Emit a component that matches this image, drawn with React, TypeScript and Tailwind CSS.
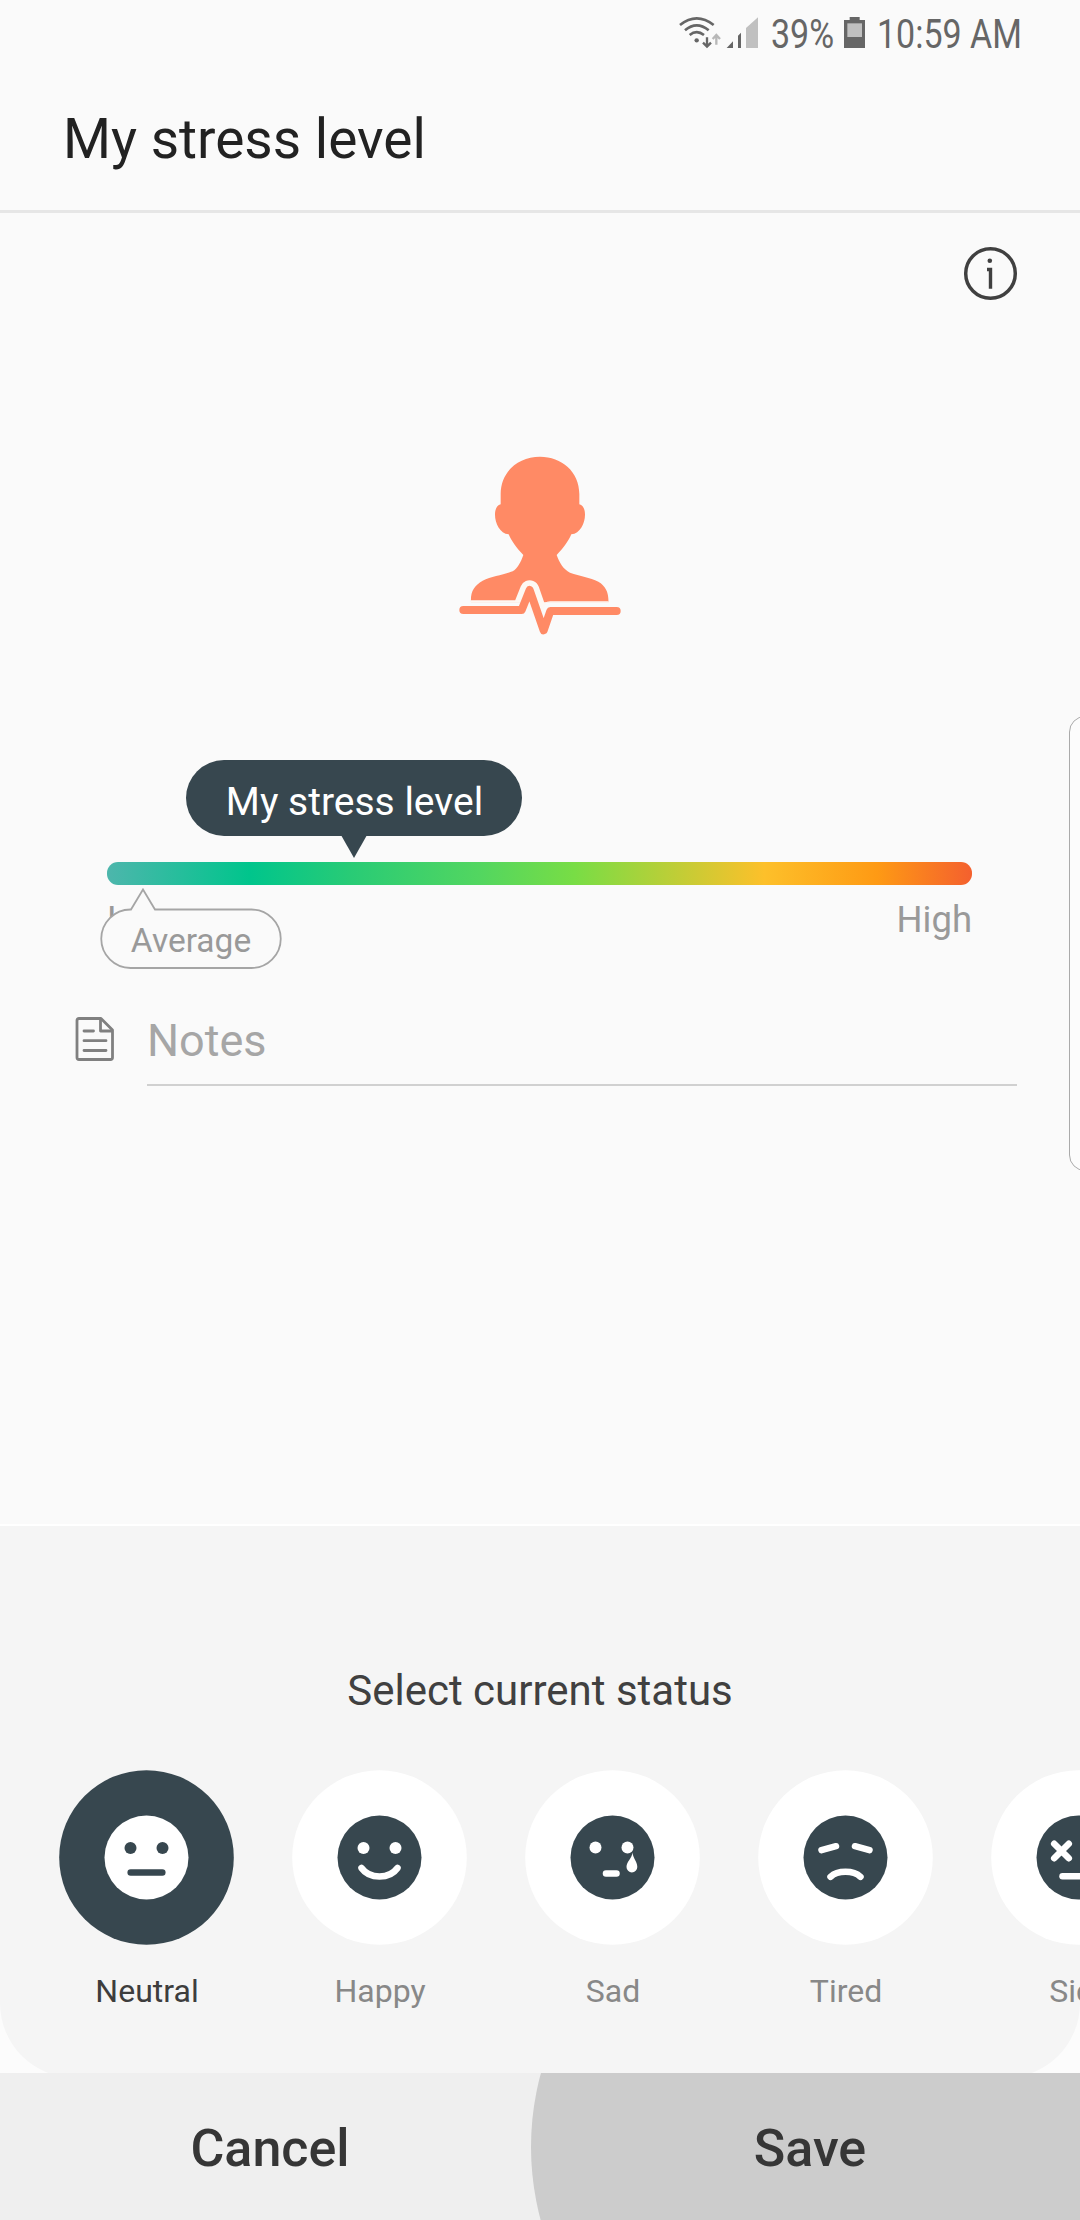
import { useState, type ReactNode } from 'react';
import clsx from 'clsx';

interface Status {
  label: string;
  face: ReactNode;
}

// Faces are drawn around 0,0. The features take the colour of the outer circle.
const statuses: Status[] = [
  {
    label: 'Neutral',
    face: (
      <>
        <circle cx="-16" cy="-9.5" r="6" fill="currentColor" stroke="none" />
        <circle cx="16" cy="-9.5" r="6" fill="currentColor" stroke="none" />
        <path d="M-15.8 15H15.8" />
      </>
    )
  },
  {
    label: 'Happy',
    face: (
      <>
        <circle cx="-16" cy="-9.5" r="6" fill="currentColor" stroke="none" />
        <circle cx="16" cy="-9.5" r="6" fill="currentColor" stroke="none" />
        <path d="M-18 10.5C-10 21.8 10 21.8 18 10.5" />
      </>
    )
  },
  {
    label: 'Sad',
    face: (
      <>
        <circle cx="-17" cy="-10" r="6" fill="currentColor" stroke="none" />
        <circle cx="15" cy="-10" r="6" fill="currentColor" stroke="none" />
        <path
          d="M20 -5C20.5 1 24.8 4 24.8 9.5A5.4 5.4 0 0 1 14 9.5C14 4 19.5 1 20 -5Z"
          fill="currentColor"
          stroke="none"
        />
        <path d="M-6.5 16H4" />
      </>
    )
  },
  {
    label: 'Tired',
    face: (
      <>
        <path d="M-24 -7.3L-9.5 -11.3M9.5 -11.3L24 -7.3" />
        <path d="M-15 19.3C-8 12.7 8 12.7 15 19.3" />
      </>
    )
  },
  {
    label: 'Sick',
    face: (
      <>
        <path d="M-24.3 -13.8L-9.7 0.8M-9.7 -13.8L-24.3 0.8M9.7 -13.8L24.3 0.8M24.3 -13.8L9.7 0.8" />
        <path d="M-16 18.7H16" />
      </>
    )
  }
];

function StatusBar() {
  return (
    <div className="flex h-[69px] items-center text-[40px] leading-none text-[#666666]">
      <svg className="ml-[675px] h-[69px] w-[85px] shrink-0" viewBox="45 0 255 207">
        <g fill="none" stroke="#666666" strokeWidth="8">
          <path d="M60 75Q110 35 161 75" />
          <path d="M75 91Q110 61 146 91" />
          <path d="M89 105Q110 88 132 105" />
        </g>
        <circle cx="110" cy="121" r="6.5" fill="#666666" />
        <path d="M141 112V139M129 128L141 140L153 128" fill="none" stroke="#666666" strokeWidth="7" />
        <path d="M169 134V106M158 117L169 105L180 117" fill="none" stroke="#b8b8b8" strokeWidth="7" />
        <path d="M200 144L219 124V144ZM234 107L243 98V144H234Z" fill="#666666" />
        <path d="M258 144V84L294 52V144Z" fill="#c0c0c0" />
      </svg>
      <span className="ml-[11px] w-[63px] origin-left scale-x-[0.85] whitespace-nowrap">39%</span>
      <svg className="ml-[10px] h-[69px] w-[21px] shrink-0" viewBox="552 0 63 207">
        <path d="M552 60H569V51H599V60H615V144H552Z" fill="#666666" />
        <path d="M562 70H606V111H562Z" fill="#c0c0c0" />
      </svg>
      <span className="ml-[12px] w-[150px] origin-left scale-x-[0.85] whitespace-nowrap">10:59 AM</span>
    </div>
  );
}

function PersonIcon() {
  return (
    <svg className="h-[210px] w-[200px]" viewBox="0 0 600 630" fill="none">
      <path
        d="M182 193V162C182 95 235 50 300 50S418 95 418 162V193C430 197 435 208 435 224C435 250 420 280 394 283C387 300 370 325 350 345C358 368 370 388 390 398C420 408 450 412 475 425C498 438 507 460 505 487H93C91 455 102 437 128 422C155 409 190 405 218 394C232 386 242 368 250 345C230 325 213 300 206 283C180 280 165 250 165 224C165 208 170 197 182 193Z"
        fill="#ff8a65"
      />
      <g strokeLinecap="round" strokeLinejoin="round">
        <path d="M70 510H245L269 450L311 571L331 513H530" stroke="#fdf8f3" strokeWidth="58" clipPath="url(#body)" />
        <path d="M70 510H245L269 450L311 571L331 513H530" stroke="#ff8a65" strokeWidth="24" />
      </g>
      <clipPath id="body">
        <path d="M92 400H506V488H320L300 530H280L250 488H92Z" />
      </clipPath>
    </svg>
  );
}

function StressSlider() {
  return (
    <div className="relative ml-[107px] w-[865px] pt-[212px]">
      <div className="h-[23px] rounded-[11px] bg-[linear-gradient(90deg,#4db6ac_0%,#00c58c_16.5%,#28cb76_28%,#52d660_43%,#78dd45_54%,#fdc02a_76%,#fe9a14_89%,#f4602e_100%)]" />
      <div className="flex h-[69px] justify-between pt-[16px] text-[36.5px] leading-[37px] text-[#999999]">
        <span>Low</span>
        <span>High</span>
      </div>

      {/* Current value marker */}
      <div className="absolute top-[110px] left-[79px] flex flex-col items-center">
        <div className="flex h-[76px] w-[336px] items-center justify-center rounded-full bg-[#37474f] pt-[8px] pl-px text-[39px] leading-none whitespace-nowrap text-white">
          My stress level
        </div>
        <svg className="-mt-px h-[23px] w-[26px]" viewBox="0 0 26 23">
          <path d="M0 0H26L13 23Z" fill="#37474f" />
        </svg>
      </div>

      {/* Average marker */}
      <div className="absolute top-[238px] left-[-7px] flex h-[82px] w-[182px] items-end justify-center">
        <svg className="absolute top-0 left-0 h-[82px] w-[182px]" viewBox="0 0 182 82">
          <path
            d="M31 21.5L43 1.5L55 21.5H151.5A29.25 29.25 0 0 1 151.5 80H30.5A29.25 29.25 0 0 1 30.5 21.5Z"
            fill="#fafafa"
            stroke="#a5a5a5"
            strokeWidth="1.8"
          />
        </svg>
        <span className="relative mb-[13px] text-[33.5px] leading-none text-[#999999]">Average</span>
      </div>
    </div>
  );
}

function NotesField() {
  return (
    <div className="flex h-[85px] pl-[75px]">
      <svg className="mt-[15px] h-[46px] w-[40px]" viewBox="0 0 40 46" fill="none" stroke="#808080" strokeWidth="2.8" strokeLinejoin="round">
        <path d="M4 2.5H26L37.5 14V41.5Q37.5 43.5 35.5 43.5H4Q2 43.5 2 41.5V4.5Q2 2.5 4 2.5Z" />
        <path d="M25.5 3V15H37" />
        <path d="M9 15H18.5M9 24.7H31M9 34.5H31" strokeLinecap="round" />
      </svg>
      <div className="ml-[32px] w-[870px] border-b-2 border-[#d0d0d0] pt-[17px] text-[45px] leading-[45px] text-[#a6a6a6]">
        Notes
      </div>
    </div>
  );
}

export default function App() {
  const [selected, setSelected] = useState('Neutral');

  return (
    <div className="relative flex h-[2220px] w-[1080px] flex-col overflow-hidden bg-[#fafafa] font-['Roboto',sans-serif]">
      <StatusBar />
      <header className="flex h-[144px] shrink-0 items-center border-b-[3px] border-[#e6e6e6] pl-[63px] text-[55px] leading-none text-[#222222]">
        <h1>My stress level</h1>
      </header>

      <main className="flex h-[1311px] shrink-0 flex-col">
        <div className="flex justify-end pt-[33px] pr-[62px]">
          <svg className="h-[55px] w-[55px]" viewBox="0 0 55 55" fill="none" stroke="#404040">
            <circle cx="27.5" cy="27.5" r="24.8" strokeWidth="3.5" />
            <path d="M24 23.5H27.5V42.7" strokeWidth="3.4" />
            <circle cx="26.8" cy="14.8" r="2.3" fill="#404040" stroke="none" />
          </svg>
        </div>
        <div className="flex justify-center pt-[139px]">
          <PersonIcon />
        </div>
        <StressSlider />
        <div className="pt-[47px]">
          <NotesField />
        </div>
      </main>

      <section className="flex h-[549px] shrink-0 flex-col overflow-hidden border-t-2 border-white bg-[#fcfcfc]">
        <div className="flex h-[552px] shrink-0 flex-col rounded-b-[75px] bg-[#f5f5f5] pt-[144px]">
          <h2 className="text-center text-[42px] leading-[42px] text-[#404040]">Select current status</h2>
          <div className="flex gap-[58px] overflow-hidden pt-[58px] pb-[20px] pl-[59px]">
            {statuses.map(({ label, face }) => {
              const active = label === selected;
              return (
                <button key={label} className="flex w-[175px] shrink-0 flex-col items-center" onClick={() => setSelected(label)}>
                  <svg
                    className={clsx('h-[175px] w-[175px]', active ? 'text-[#37474f]' : 'text-white')}
                    viewBox="-87.5 -87.5 175 175"
                    fill="none"
                    stroke="currentColor"
                    strokeWidth="6.5"
                    strokeLinecap="round"
                  >
                    <circle r="87.3" fill="currentColor" stroke="none" />
                    <circle r="42" fill={active ? '#ffffff' : '#37474f'} stroke="none" />
                    {face}
                  </svg>
                  <span className={clsx('mt-[25px] pl-px text-[32px] leading-[42px]', active ? 'text-[#3d3d3d]' : 'text-[#888888]')}>
                    {label}
                  </span>
                </button>
              );
            })}
          </div>
        </div>
      </section>

      <footer className="relative flex h-[147px] shrink-0 overflow-hidden bg-[#efefef] text-[52px] leading-none font-medium text-[#363636]">
        {/* Touch ripple on the Save button */}
        <div className="absolute top-[-207px] left-[531px] h-[562px] w-[562px] rounded-full bg-[#cccccc]" />
        <button className="relative flex-1 pt-[4px]">Cancel</button>
        <button className="relative flex-1 pt-[4px]">Save</button>
      </footer>

      {/* Edge panel peeking in from the right */}
      <div className="absolute top-[716px] left-[1069px] h-[455px] w-[40px] rounded-[16px] border-[1.5px] border-[#aaaaaa] bg-[#fcfcfc]" />
    </div>
  );
}
